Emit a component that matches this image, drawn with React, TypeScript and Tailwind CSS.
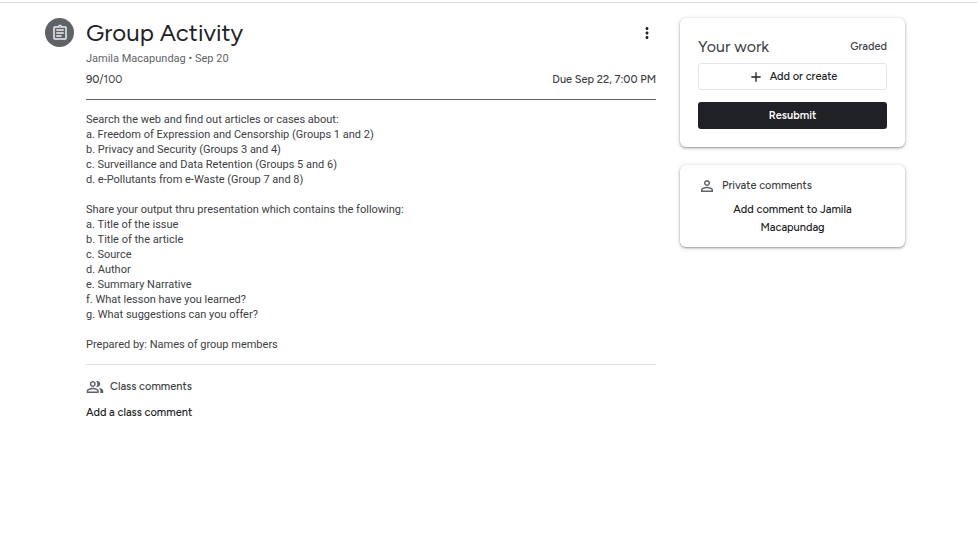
import React from "react";
import {
  MdAdd,
  MdMoreVert,
  MdOutlineAssignment,
  MdOutlinePeopleAlt,
  MdPersonOutline,
} from "react-icons/md";

const topics = [
  "Search the web and find out articles or cases about:",
  "a. Freedom of Expression and Censorship (Groups 1 and 2)",
  "b. Privacy and Security (Groups 3 and 4)",
  "c. Surveillance and Data Retention (Groups 5 and 6)",
  "d. e-Pollutants from e-Waste (Group 7 and 8)",
];

const contents = [
  "Share your output thru presentation which contains the following:",
  "a. Title of the issue",
  "b. Title of the article",
  "c. Source",
  "d. Author",
  "e. Summary Narrative",
  "f. What lesson have you learned?",
  "g. What suggestions can you offer?",
];

function Paragraph({ lines }: { lines: string[] }) {
  return (
    <div>
      {lines.map((line) => (
        <p key={line}>{line}</p>
      ))}
    </div>
  );
}

function Card({ children }: { children: React.ReactNode }) {
  return (
    <section className="rounded-md bg-white px-[18px] shadow-[0_1px_2px_rgba(60,64,67,0.4),0_1px_4px_rgba(60,64,67,0.25)]">
      {children}
    </section>
  );
}

function Assignment() {
  return (
    <article className="min-w-0 flex-1">
      <header className="border-b border-[#5f6368] pb-[10px]">
        <div className="flex h-[30px] items-center justify-between">
          <h1 className="font-[Figtree,Inter,sans-serif] text-[24px] leading-[30px] text-[#202124]">
            Group Activity
          </h1>
          <button type="button" aria-label="More options" className="text-[#202124]">
            <MdMoreVert size={18} />
          </button>
        </div>
        <p className="mt-[3px] text-[11px] leading-4 text-[#5f6368]">Jamila Macapundag • Sep 20</p>
        <div className="mt-1 flex justify-between font-[Figtree,Inter,sans-serif] text-[11px] leading-[18px] text-[#3c4043]">
          <span>
            <span className="font-medium">90</span>/100
          </span>
          <span className="font-medium">Due Sep 22, 7:00 PM</span>
        </div>
      </header>
      <div className="flex flex-col gap-[15px] border-b border-[#e0e0e0] pt-3 pb-3 text-[11px] leading-[15px] text-[#3c4043]">
        <Paragraph lines={topics} />
        <Paragraph lines={contents} />
        <Paragraph lines={["Prepared by: Names of group members"]} />
      </div>
      <section className="pt-3 font-[Figtree,Inter,sans-serif] text-[11px] font-medium">
        <h2 className="flex items-center gap-[6px] leading-5 text-[#3c4043]">
          <MdOutlinePeopleAlt size={18} className="text-[#5f6368]" />
          Class comments
        </h2>
        <button type="button" className="mt-[7px] leading-[18px] text-[#202124]">
          Add a class comment
        </button>
      </section>
    </article>
  );
}

function Sidebar() {
  return (
    <aside className="flex w-[225px] shrink-0 flex-col gap-[18px] font-[Figtree,Inter,sans-serif] text-[11px] font-medium">
      <Card>
        <div className="pt-[18px] pb-[18px]">
          <div className="mb-[5px] flex h-[22px] items-center justify-between text-[#3c4043]">
            <h2 className="text-[16px] font-normal">Your work</h2>
            <span>Graded</span>
          </div>
          <button
            type="button"
            className="flex h-[27px] w-full items-center justify-center gap-[6px] rounded-[3px] border border-[#e4e5e9] pt-px text-[#202124]"
          >
            <MdAdd size={16} />
            Add or create
          </button>
          <button
            type="button"
            className="mt-3 h-[27px] w-full rounded-[3px] bg-[#202124] pt-px font-semibold text-white"
          >
            Resubmit
          </button>
        </div>
      </Card>
      <Card>
        <div className="pt-3 pb-[10px]">
          <h2 className="flex items-center gap-[6px] leading-[18px] text-[#3c4043]">
            <MdPersonOutline size={18} className="text-[#5f6368]" />
            Private comments
          </h2>
          <button
            type="button"
            className="mt-[6px] w-full px-6 text-center leading-[18px] text-[#202124]"
          >
            Add comment to Jamila Macapundag
          </button>
        </div>
      </Card>
    </aside>
  );
}

export default function App() {
  return (
    <div className="min-h-screen bg-white pt-[2px] font-[Roboto,sans-serif]">
      <div className="border-t border-[#dcdcdc]" />
      <main className="flex pt-[15px] pr-[72px] pl-[45px]">
        <div className="mr-3 flex size-[29px] shrink-0 items-center justify-center rounded-full bg-[#5f6368] text-[#eeeeee]">
          <MdOutlineAssignment size={18} />
        </div>
        <Assignment />
        <div className="ml-6 flex">
          <Sidebar />
        </div>
      </main>
    </div>
  );
}
